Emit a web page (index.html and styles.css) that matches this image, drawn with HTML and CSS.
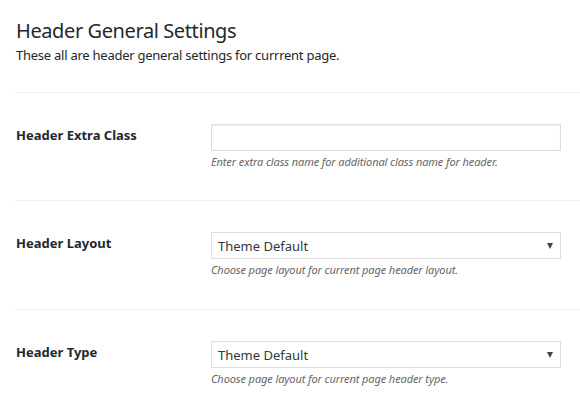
FILE: index.html
```html
<!DOCTYPE html>
<html>
<head>
<meta charset="utf-8">
<link rel="stylesheet" href="styles.css">
</head>
<body>
<div class="panel">
  <div class="intro">
    <h2 class="title">Header General Settings</h2>
    <p class="subtitle">These all are header general settings for currrent page.</p>
  </div>
  <div class="row">
    <div class="label">Header Extra Class</div>
    <div class="field">
      <div class="input"></div>
      <div class="help">Enter extra class name for additional class name for header.</div>
    </div>
  </div>
  <div class="row">
    <div class="label">Header Layout</div>
    <div class="field">
      <div class="input select"><span>Theme Default</span><span class="arrow"></span></div>
      <div class="help">Choose page layout for current page header layout.</div>
    </div>
  </div>
  <div class="row">
    <div class="label">Header Type</div>
    <div class="field">
      <div class="input select"><span>Theme Default</span><span class="arrow"></span></div>
      <div class="help">Choose page layout for current page header type.</div>
    </div>
  </div>
</div>
</body>
</html>
```

FILE: styles.css
```css
html, body {
  margin: 0;
  padding: 0;
  background: #fff;
}
body {
  font-family: "Noto Sans", "Open Sans", sans-serif;
  color: #23282d;
}
.panel {
  padding-left: 15px;
}
.intro {
  padding: 17px 0 0 1px;
  height: 92px;
  box-sizing: border-box;
}
.title {
  margin: 0;
  font-size: 20px;
  font-weight: 400;
  line-height: 27px;
  letter-spacing: -0.4px;
  color: #23282d;
}
.subtitle {
  margin: 2px 0 0;
  font-size: 13px;
  line-height: 18px;
  letter-spacing: -0.25px;
  color: #23282d;
}
.row {
  display: grid;
  grid-template-columns: 195px 350px;
  border-top: 1px solid #eeeeee;
  padding: 31px 0 31px 1px;
  height: 109px;
  box-sizing: border-box;
}
.intro + .row {
  height: 108px;
}
.label {
  font-size: 13px;
  font-weight: 700;
  line-height: 18px;
  padding-top: 2px;
  color: #23282d;
}
.input {
  height: 27px;
  box-sizing: border-box;
  border: 1px solid #dddddd;
  box-shadow: inset 0 1px 2px rgba(0,0,0,0.07);
  background: #fff;
}
.select {
  display: flex;
  align-items: center;
  justify-content: space-between;
  padding: 0 7px 0 6px;
  font-size: 13px;
  color: #32373c;
  box-shadow: none;
}
.arrow {
  width: 0;
  height: 0;
  border-left: 3px solid transparent;
  border-right: 3px solid transparent;
  border-top: 6px solid #444;
}
.help {
  margin-top: 3px;
  font-size: 11px;
  font-style: italic;
  line-height: 16px;
  letter-spacing: -0.1px;
  color: #666;
}
```
